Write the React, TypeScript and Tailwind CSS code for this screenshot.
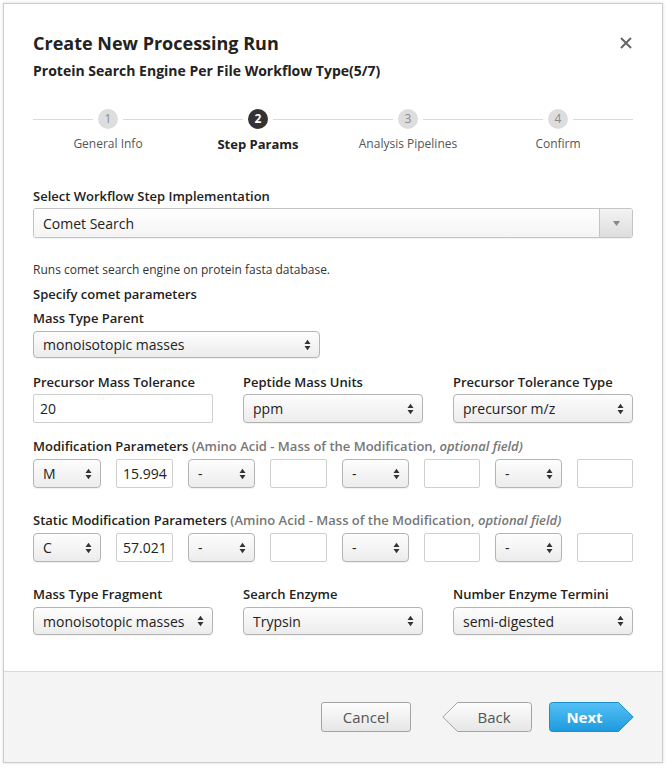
import React from "react";

function Arrows() {
  return (
    <svg width="7" height="12" viewBox="0 0 7 12" className="shrink-0">
      <path d="M0.5 5 L3.5 0.8 L6.5 5 Z" fill="#333" />
      <path d="M0.5 7 L3.5 11.2 L6.5 7 Z" fill="#333" />
    </svg>
  );
}

function Select({ value, className = "" }: { value: string; className?: string }) {
  return (
    <div
      className={`flex items-center justify-between rounded-[4px] border border-[#b4b4b4] bg-gradient-to-b from-[#fdfdfd] to-[#ececec] pl-[9px] pr-[8px] text-[14px] text-[#222] shadow-[0_1px_1px_rgba(0,0,0,0.06)] ${className}`}
    >
      <span className="truncate">{value}</span>
      <Arrows />
    </div>
  );
}

function Input({ value = "", className = "" }: { value?: string; className?: string }) {
  return (
    <div
      className={`flex items-center rounded-[2px] border border-[#cfcfcf] bg-white px-[6px] text-[14px] text-[#222] ${className}`}
    >
      {value}
    </div>
  );
}

function Label({ children, className = "" }: { children: React.ReactNode; className?: string }) {
  return <div className={`text-[13px] font-semibold leading-[18px] text-[#222] ${className}`}>{children}</div>;
}

const steps = ["General Info", "Step Params", "Analysis Pipelines", "Confirm"];

function Stepper() {
  return (
    <div className="mt-[29px] grid grid-cols-4">
      {steps.map((s, i) => {
        const active = i === 1;
        return (
          <div key={s} className="flex flex-col items-center">
            <div className="flex w-full items-center">
              <div className="h-px flex-1 bg-[#d9d9d9]" />
              <div
                className={`mx-[5px] flex h-[20px] w-[20px] items-center justify-center rounded-full text-[12px] ${
                  active ? "bg-[#333] font-bold text-white" : "bg-[#ddd] text-[#8a8a8a]"
                }`}
              >
                {i + 1}
              </div>
              <div className="h-px flex-1 bg-[#d9d9d9]" />
            </div>
            <div
              className={`mt-[7px] leading-[16px] ${
                active ? "text-[13px] font-bold text-[#222]" : "text-[12px] text-[#555]"
              }`}
            >
              {s}
            </div>
          </div>
        );
      })}
    </div>
  );
}

function ModRow({ aa, mass }: { aa: string; mass: string }) {
  return (
    <div className="mt-[4px] grid h-[29px] grid-cols-[68px_57px_67px_57px_67px_56px_67px_56px] gap-x-[15px]">
      <Select value={aa} />
      <Input value={mass} />
      <Select value="-" />
      <Input />
      <Select value="-" />
      <Input />
      <Select value="-" />
      <Input />
    </div>
  );
}

function BackButton() {
  return (
    <div className="relative flex h-[30px] w-[90px] items-center justify-center pl-[14px] text-[15px] text-[#555]">
      <svg width="90" height="30" viewBox="0 0 90 30" className="absolute inset-0">
        <defs>
          <linearGradient id="gBack" x1="0" y1="0" x2="0" y2="1">
            <stop offset="0" stopColor="#fdfdfd" />
            <stop offset="1" stopColor="#e6e6e6" />
          </linearGradient>
        </defs>
        <path
          d="M15.5 0.5 H86.5 Q89.5 0.5 89.5 3.5 V26.5 Q89.5 29.5 86.5 29.5 H15.5 L0.8 15 Z"
          fill="url(#gBack)"
          stroke="#a3a3a3"
        />
      </svg>
      <span className="relative">Back</span>
    </div>
  );
}

function NextButton() {
  return (
    <div className="relative flex h-[30px] w-[85px] items-center justify-center pr-[14px] text-[15px] font-bold text-white">
      <svg width="85" height="30" viewBox="0 0 85 30" className="absolute inset-0">
        <defs>
          <linearGradient id="gNext" x1="0" y1="0" x2="0" y2="1">
            <stop offset="0" stopColor="#55c0f6" />
            <stop offset="1" stopColor="#1d9ade" />
          </linearGradient>
        </defs>
        <path
          d="M3.5 0.5 H69.5 L84.2 15 L69.5 29.5 H3.5 Q0.5 29.5 0.5 26.5 V3.5 Q0.5 0.5 3.5 0.5 Z"
          fill="url(#gNext)"
          stroke="#1b8ccc"
        />
      </svg>
      <span className="relative">Next</span>
    </div>
  );
}

export default function App() {
  return (
    <div className="min-h-[768px] bg-white p-[3px] font-['Open_Sans',sans-serif]">
      <div className="flex h-[760px] w-[660px] flex-col border border-[#cdcdcd] bg-white shadow-[0_0_3px_rgba(0,0,0,0.15)]">
        <div className="flex-1 px-[29px] pt-[27px]">
          <div className="flex items-center justify-between">
            <h1 className="text-[18px] font-bold leading-[24px] text-[#222]">Create New Processing Run</h1>
            <svg width="12" height="12" viewBox="0 0 12 12" className="mr-[1px]">
              <path d="M1 1 L11 11 M11 1 L1 11" stroke="#666" strokeWidth="2" />
            </svg>
          </div>
          <div className="mt-[6px] text-[14px] font-bold leading-[19px] text-[#222]">
            Protein Search Engine Per File Workflow Type(5/7)
          </div>

          <Stepper />

          <Label className="mt-[35px]">Select Workflow Step Implementation</Label>
          <div className="mt-[3px] flex h-[30px] overflow-hidden rounded-[3px] border border-[#c4c4c4] shadow-[0_1px_1px_rgba(0,0,0,0.06)]">
            <div className="flex flex-1 items-center bg-gradient-to-b from-white to-[#f4f4f4] pl-[9px] text-[14px] text-[#222]">
              Comet Search
            </div>
            <div className="flex w-[33px] items-center justify-center border-l border-[#c4c4c4] bg-gradient-to-b from-[#f3f3f3] to-[#dedede]">
              <svg width="7" height="5" viewBox="0 0 7 5">
                <path d="M0 0 H7 L3.5 5 Z" fill="#888" />
              </svg>
            </div>
          </div>

          <div className="mt-[24px] text-[12px] leading-[16px] text-[#333]">
            Runs comet search engine on protein fasta database.
          </div>
          <Label className="mt-[7px]">Specify comet parameters</Label>
          <Label className="mt-[6px]">Mass Type Parent</Label>
          <Select value="monoisotopic masses" className="mt-[4px] h-[27px] w-[287px]" />

          <div className="mt-[15px] grid grid-cols-3 gap-x-[30px]">
            <div>
              <Label>Precursor Mass Tolerance</Label>
              <Input value="20" className="mt-[3px] h-[29px]" />
            </div>
            <div>
              <Label>Peptide Mass Units</Label>
              <Select value="ppm" className="mt-[3px] h-[29px]" />
            </div>
            <div>
              <Label>Precursor Tolerance Type</Label>
              <Select value="precursor m/z" className="mt-[3px] h-[29px]" />
            </div>
          </div>

          <Label className="mt-[14px]">
            Modification Parameters{" "}
            <span className="text-[#777]">
              (Amino Acid - Mass of the Modification, <i>optional field)</i>
            </span>
          </Label>
          <ModRow aa="M" mass="15.994" />

          <Label className="mt-[23px]">
            Static Modification Parameters{" "}
            <span className="text-[#777]">
              (Amino Acid - Mass of the Modification, <i>optional field)</i>
            </span>
          </Label>
          <ModRow aa="C" mass="57.021" />

          <div className="mt-[23px] grid grid-cols-3 gap-x-[30px]">
            <div>
              <Label>Mass Type Fragment</Label>
              <Select value="monoisotopic masses" className="mt-[4px] h-[28px]" />
            </div>
            <div>
              <Label>Search Enzyme</Label>
              <Select value="Trypsin" className="mt-[4px] h-[28px]" />
            </div>
            <div>
              <Label>Number Enzyme Termini</Label>
              <Select value="semi-digested" className="mt-[4px] h-[28px]" />
            </div>
          </div>
        </div>

        <div className="flex h-[91px] items-start justify-end border-t border-[#d9d9d9] bg-[#f4f4f4] pr-[28px] pt-[30px]">
          <div className="flex h-[30px] w-[90px] items-center justify-center rounded-[3px] border border-[#a3a3a3] bg-gradient-to-b from-[#fdfdfd] to-[#e6e6e6] text-[15px] text-[#555]">
            Cancel
          </div>
          <div className="ml-[31px]">
            <BackButton />
          </div>
          <div className="ml-[17px]">
            <NextButton />
          </div>
        </div>
      </div>
    </div>
  );
}
